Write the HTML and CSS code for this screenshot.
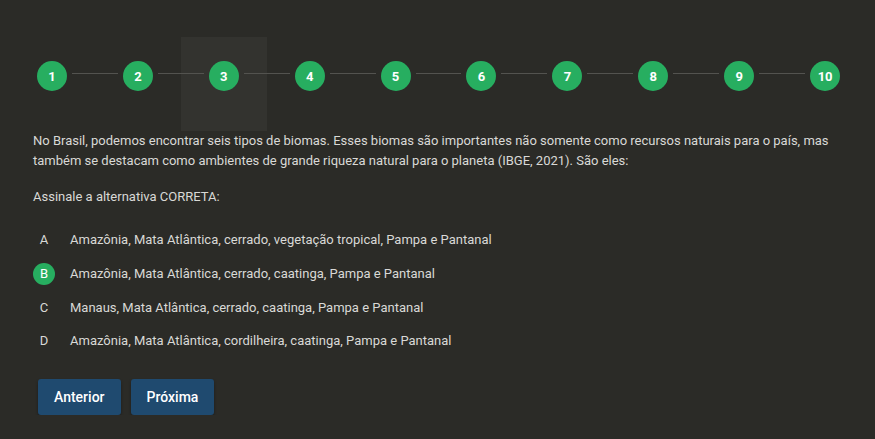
FILE: index.html
```html
<!DOCTYPE html>
<html lang="pt-BR">
<head>
<meta charset="utf-8">
<title>Questionário</title>
<link rel="stylesheet" href="styles.css">
</head>
<body>
<div class="page">
  <div class="stepper">
    <div class="step first"><span class="seg"></span><span class="num">1</span><span class="seg"></span></div>
    <div class="step"><span class="seg"></span><span class="num">2</span><span class="seg"></span></div>
    <div class="step active"><span class="seg"></span><span class="num">3</span><span class="seg"></span></div>
    <div class="step"><span class="seg"></span><span class="num">4</span><span class="seg"></span></div>
    <div class="step"><span class="seg"></span><span class="num">5</span><span class="seg"></span></div>
    <div class="step"><span class="seg"></span><span class="num">6</span><span class="seg"></span></div>
    <div class="step"><span class="seg"></span><span class="num">7</span><span class="seg"></span></div>
    <div class="step"><span class="seg"></span><span class="num">8</span><span class="seg"></span></div>
    <div class="step"><span class="seg"></span><span class="num">9</span><span class="seg"></span></div>
    <div class="step last"><span class="seg"></span><span class="num">10</span><span class="seg"></span></div>
  </div>
  <div class="content">
    <p class="statement">No Brasil, podemos encontrar seis tipos de biomas. Esses biomas são importantes não somente como recursos naturais para o país, mas também se destacam como ambientes de grande riqueza natural para o planeta (IBGE, 2021). São eles:</p>
    <p class="prompt">Assinale a alternativa CORRETA:</p>
    <ul class="options">
      <li class="option"><span class="letter">A</span><span class="text">Amazônia, Mata Atlântica, cerrado, vegetação tropical, Pampa e Pantanal</span></li>
      <li class="option selected"><span class="letter">B</span><span class="text">Amazônia, Mata Atlântica, cerrado, caatinga, Pampa e Pantanal</span></li>
      <li class="option"><span class="letter">C</span><span class="text">Manaus, Mata Atlântica, cerrado, caatinga, Pampa e Pantanal</span></li>
      <li class="option"><span class="letter">D</span><span class="text">Amazônia, Mata Atlântica, cordilheira, caatinga, Pampa e Pantanal</span></li>
    </ul>
    <div class="actions">
      <button class="btn">Anterior</button>
      <button class="btn">Próxima</button>
    </div>
  </div>
</div>
</body>
</html>
```

FILE: styles.css
```css
html, body {
  margin: 0;
  padding: 0;
  background: #2b2b27;
}
body {
  font-family: "Roboto", "Noto Sans", sans-serif;
  color: #d9d9d6;
  font-size: 13px;
}
.page {
  padding: 37px 7px 0 9px;
}
.stepper {
  display: flex;
}
.step {
  flex: 1;
  height: 94px;
  display: flex;
  align-items: center;
  padding-bottom: 16px;
  box-sizing: border-box;
}
.step.active {
  background: #33332f;
}
.seg {
  flex: 1;
  height: 1px;
  background: #53534f;
  margin-bottom: 6px;
}
.step .seg:first-child { margin-right: 5px; }
.step .seg:last-child { margin-left: 5px; }
.step.first .seg:first-child,
.step.last .seg:last-child { background: transparent; }
.num {
  width: 30px;
  height: 30px;
  border-radius: 50%;
  background: #27ae60;
  color: #fff;
  font-weight: 700;
  font-size: 13px;
  display: flex;
  align-items: center;
  justify-content: center;
  flex: none;
}
.content {
  padding-left: 24px;
}
.statement {
  margin: 0;
  line-height: 20px;
  padding-right: 30px;
}
.prompt {
  margin: 16px 0 0;
  line-height: 20px;
}
.options {
  list-style: none;
  margin: 16px 0 0;
  padding: 0;
}
.option {
  display: flex;
  align-items: center;
  height: 33.7px;
}
.letter {
  width: 22px;
  height: 22px;
  border-radius: 50%;
  display: flex;
  align-items: center;
  justify-content: center;
  margin-right: 15px;
  flex: none;
}
.selected .letter {
  background: #27ae60;
  color: #fff;
}
.actions {
  display: flex;
  gap: 10px;
  margin-top: 21px;
  padding-left: 5px;
}
.btn {
  height: 36px;
  padding: 0 16px;
  border: none;
  border-radius: 3px;
  background: #1f4a6f;
  color: #fff;
  font-family: "Roboto", sans-serif;
  font-weight: 500;
  font-size: 14px;
  box-shadow: 0 2px 3px rgba(0,0,0,0.35);
}
```
